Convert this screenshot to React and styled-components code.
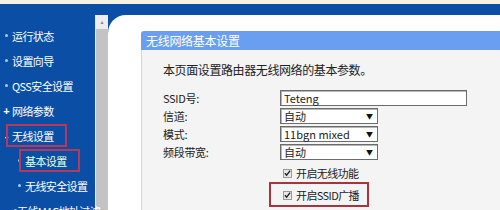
import styled, { createGlobalStyle } from "styled-components";

const GlobalStyle = createGlobalStyle`
    html, body {
        margin: 0;
        padding: 0;
        width: 500px;
        height: 210px;
        overflow: hidden;
        background: #ffffff;
        font-family: "Liberation Sans", "Noto Sans CJK SC", sans-serif;
    }
`

const menu = [
    { text: "运行状态", mark: "dot" },
    { text: "设置向导", mark: "dot" },
    { text: "QSS安全设置", mark: "dot" },
    { text: "网络参数", mark: "plus" },
    { text: "无线设置", mark: "minus", boxed: true },
    { text: "基本设置", mark: "dot", sub: true, boxed: true, active: true },
    { text: "无线安全设置", mark: "dot", sub: true },
    { text: "无线MAC地址过滤", mark: "dot", sub: true },
];

const fields = [
    { label: "SSID号:", kind: "input", value: "Teteng" },
    { label: "信道:", kind: "select", value: "自动" },
    { label: "模式:", kind: "select", value: "11bgn mixed" },
    { label: "频段带宽:", kind: "select", value: "自动" },
];

const checks = [
    { text: "开启无线功能" },
    { text: "开启SSID广播", boxed: true },
    { text: "开启WDS" },
];

function Tick() {
    return (
        <svg width="8" height="8" viewBox="0 0 8 8">
            <path d="M1 4.2 L3 6.5 L7 1.2" fill="none" stroke="#222" strokeWidth="1.6" />
        </svg>
    )
}

export default function App() {
    return (
        <Page>
            <GlobalStyle />
            <TopStrip />
            <Frame>
                <Sidebar>
                    {menu.map(item => (
                        <MenuItem key={item.text} sub={item.sub}>
                            <Mark>{item.mark === "plus" ? "+" : item.mark === "minus" ? "-" : <Dot />}</Mark>
                            <MenuText boxed={item.boxed} active={item.active}>{item.text}</MenuText>
                        </MenuItem>
                    ))}
                </Sidebar>
                <ScrollBar>
                    <ScrollButton>▲</ScrollButton>
                    <ScrollTrack />
                </ScrollBar>
                <Main>
                    <Panel>
                        <PanelTitle>无线网络基本设置</PanelTitle>
                        <PanelBody>
                            <Intro>本页面设置路由器无线网络的基本参数。</Intro>
                            <Form>
                                {fields.map(f => (
                                    <Row key={f.label}>
                                        <Label>{f.label}</Label>
                                        {f.kind === "input"
                                            ? <TextBox>{f.value}</TextBox>
                                            : <SelectBox>{f.value}<Arrow>▼</Arrow></SelectBox>}
                                    </Row>
                                ))}
                                <Checks>
                                    {checks.map(c => (
                                        <CheckRow key={c.text} boxed={c.boxed}>
                                            <CheckBox><Tick /></CheckBox>
                                            <span>{c.text}</span>
                                        </CheckRow>
                                    ))}
                                </Checks>
                            </Form>
                        </PanelBody>
                    </Panel>
                </Main>
            </Frame>
        </Page>
    )
}

const Page = styled.div`
    width: 500px;
    height: 210px;
    display: flex;
    flex-direction: column;
    overflow: hidden;
`

const TopStrip = styled.div`
    height: 4px;
    background: #f6f2e2;
    flex-shrink: 0;
`

const Frame = styled.div`
    flex: 1;
    display: flex;
    background: #0b4ea6;
    min-height: 0;
`

const Sidebar = styled.ul`
    width: 95px;
    flex-shrink: 0;
    margin: 0;
    padding: 19px 0 0 0;
    list-style: none;
`

const MenuItem = styled.li`
    height: 25px;
    display: flex;
    align-items: center;
    padding-left: ${p => p.sub ? "14px" : "1px"};
    white-space: nowrap;
`

const Mark = styled.span`
    width: 11px;
    display: flex;
    align-items: center;
    justify-content: center;
    color: #ffffff;
    font-size: 11px;
    font-weight: bold;
`

const Dot = styled.span`
    width: 3px;
    height: 3px;
    border-radius: 50%;
    background: #a9c9f2;
`

const MenuText = styled.span`
    position: relative;
    color: ${p => p.active ? "#eaffd9" : "#ffffff"};
    font-family: "Noto Sans CJK SC", "Liberation Sans", sans-serif;
    font-size: 11px;
    letter-spacing: -0.6px;
    line-height: 12px;

    &::after {
        content: "";
        display: ${p => p.boxed ? "block" : "none"};
        position: absolute;
        top: -6px;
        bottom: -5px;
        left: -6px;
        right: -13px;
        border: 2px solid #b8385a;
    }
`

const ScrollBar = styled.div`
    width: 13px;
    flex-shrink: 0;
    margin-top: 11px;
    display: flex;
    flex-direction: column;
    border-left: 1px solid #e6e6e6;
    box-sizing: border-box;
`

const ScrollButton = styled.div`
    height: 14px;
    background: #ededed;
    color: #8a8a8a;
    font-size: 5px;
    display: flex;
    align-items: center;
    justify-content: center;
`

const ScrollTrack = styled.div`
    flex: 1;
    background: #c3c3c3;
`

const Main = styled.div`
    flex: 1;
    margin-top: 11px;
    background: #ffffff;
    border-top-left-radius: 18px;
    padding: 16px 0 0 33px;
    overflow: hidden;
`

const Panel = styled.div`
    width: 420px;
    height: 100%;
    display: flex;
    flex-direction: column;
`

const PanelTitle = styled.div`
    height: 19px;
    background: #6a9ef0;
    color: #ffffff;
    font-family: "Noto Sans CJK SC", "Liberation Sans", sans-serif;
    font-size: 12px;
    line-height: 19px;
    padding-left: 5px;
    letter-spacing: -0.3px;
    border-top-left-radius: 3px;
`

const PanelBody = styled.div`
    flex: 1;
    background: #f4f4f4;
    border-left: 1px solid #e3d6ac;
    padding: 13px 0 0 21px;
`

const Intro = styled.div`
    font-family: "Noto Sans CJK SC", "Liberation Sans", sans-serif;
    font-size: 12px;
    line-height: 14px;
    color: #222222;
    letter-spacing: -0.4px;
`

const Form = styled.div`
    margin-top: 13px;
    display: flex;
    flex-direction: column;
    gap: 2px;
`

const Row = styled.div`
    display: grid;
    grid-template-columns: 117px auto;
    align-items: center;
    height: 16px;
`

const Label = styled.span`
    font-family: "Noto Sans CJK SC", "Liberation Mono", monospace;
    font-size: 11px;
    color: #222222;
    letter-spacing: -0.3px;
`

const Field = styled.div`
    height: 16px;
    box-sizing: border-box;
    border: 1px solid #6c6c6c;
    box-shadow: inset 1px 1px 0 #b5b5b5;
    background: #ffffff;
    font-family: "Noto Sans CJK SC", "Liberation Sans", sans-serif;
    font-size: 11px;
    line-height: 14px;
    color: #222222;
    padding-left: 3px;
    white-space: nowrap;
`

const TextBox = styled(Field)`
    width: 187px;
`

const SelectBox = styled(Field)`
    width: 98px;
    display: flex;
    justify-content: space-between;
    padding-right: 4px;
`

const Arrow = styled.span`
    font-size: 7px;
    color: #111111;
`

const Checks = styled.div`
    margin: 4px 0 0 120px;
    display: flex;
    flex-direction: column;
    gap: 8px;
`

const CheckRow = styled.div`
    position: relative;
    height: 14px;
    display: flex;
    align-items: center;
    gap: 4px;
    font-family: "Noto Sans CJK SC", "Liberation Sans", sans-serif;
    font-size: 11px;
    color: #222222;
    letter-spacing: -0.6px;

    &::after {
        content: "";
        display: ${p => p.boxed ? "block" : "none"};
        position: absolute;
        top: -6px;
        bottom: -5px;
        left: -14px;
        width: 96px;
        border: 2px solid #a8343c;
    }
`

const CheckBox = styled.span`
    width: 9px;
    height: 9px;
    box-sizing: border-box;
    border: 1px solid #9a9a9a;
    background: #e8e8e8;
    display: flex;
    align-items: center;
    justify-content: center;
`
